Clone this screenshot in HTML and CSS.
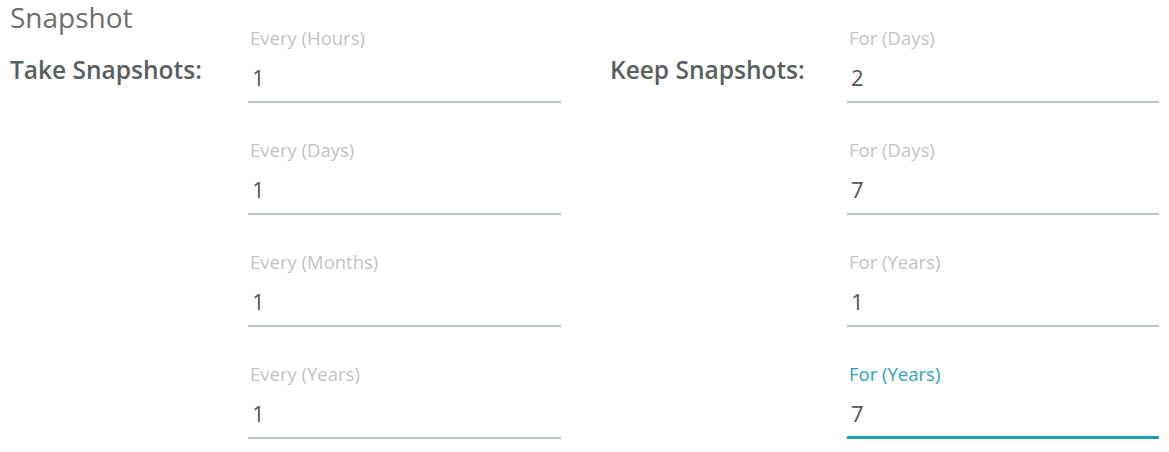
FILE: index.html
```html
<!DOCTYPE html>
<html>
<head>
<meta charset="utf-8">
<link rel="stylesheet" href="styles.css">
</head>
<body>
<div class="page">
  <div class="title">Snapshot</div>
  <div class="grid">
    <div class="rowlabel">Take Snapshots:</div>
    <div class="col">
      <div class="field"><div class="flabel">Every (Hours)</div><div class="fvalue">1</div></div>
      <div class="field"><div class="flabel">Every (Days)</div><div class="fvalue">1</div></div>
      <div class="field"><div class="flabel">Every (Months)</div><div class="fvalue">1</div></div>
      <div class="field"><div class="flabel">Every (Years)</div><div class="fvalue">1</div></div>
    </div>
    <div class="rowlabel keep">Keep Snapshots:</div>
    <div class="col">
      <div class="field"><div class="flabel">For (Days)</div><div class="fvalue">2</div></div>
      <div class="field"><div class="flabel">For (Days)</div><div class="fvalue">7</div></div>
      <div class="field"><div class="flabel">For (Years)</div><div class="fvalue">1</div></div>
      <div class="field focused"><div class="flabel">For (Years)</div><div class="fvalue">7</div></div>
    </div>
  </div>
</div>
</body>
</html>
```
FILE: styles.css
```css
html, body { margin: 0; padding: 0; background: #fff; }
body { font-family: "Open Sans", "Liberation Sans", sans-serif; color: #555; }
.page { padding: 0 0 0 10px; }
.title { font-size: 28px; line-height: 34px; color: #6e6e6e; height: 28px; }
.grid { display: grid; grid-template-columns: 238px 313px 286px 312px; }
.rowlabel { font-size: 24.5px; font-weight: 600; color: #58605f; padding-top: 27px; line-height: 30px; }
.keep { padding-left: 49px; }
.col { display: flex; flex-direction: column; gap: 37px; }
.field { box-sizing: border-box; }
.flabel { font-size: 18.5px; line-height: 20px; color: #c3c3c3; padding-left: 2px; }
.fvalue { font-size: 22px; line-height: 30px; margin-top: 14px; padding-left: 4px; padding-bottom: 9px; color: #555; border-bottom: 2px solid #bac5cb; }
.focused .flabel { color: #2aa3b6; }
.focused .fvalue { border-bottom: 3px solid #1a9fb4; padding-bottom: 8px; }
```
